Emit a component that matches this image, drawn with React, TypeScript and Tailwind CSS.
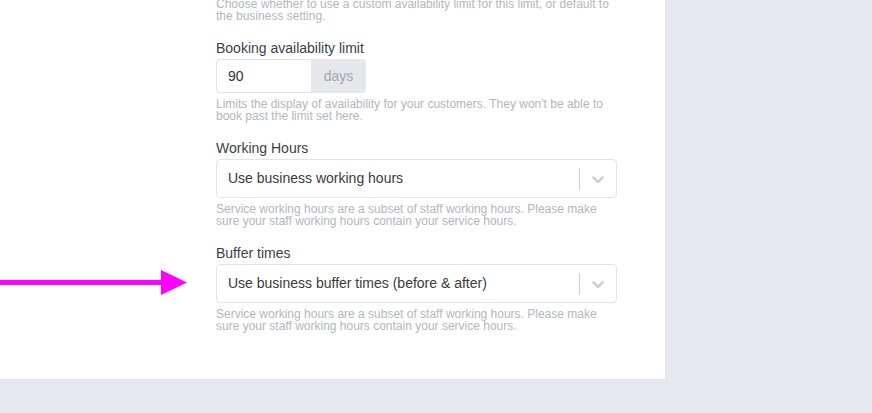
import React from 'react';

const font = { fontFamily: '"Liberation Sans", Arial, Helvetica, sans-serif' };

const Chevron: React.FC = () => (
  <svg viewBox="0 0 20 20" width="20" height="20" className="fill-[#cccccc]">
    <path d="M4.516 7.548c0.436-0.446 1.043-0.481 1.576 0l3.908 3.747 3.908-3.747c0.533-0.481 1.141-0.446 1.574 0 0.436 0.445 0.408 1.197 0 1.615-0.406 0.418-4.695 4.502-4.695 4.502-0.217 0.223-0.502 0.335-0.787 0.335s-0.57-0.112-0.789-0.335c0 0-4.287-4.084-4.695-4.502s-0.436-1.17 0-1.615z" />
  </svg>
);

const Help: React.FC<{ children: React.ReactNode; className?: string }> = ({ children, className = '' }) => (
  <p className={`text-[12px] leading-[12px] text-[#b3b6bd] ${className}`}>{children}</p>
);

const Label: React.FC<{ children: React.ReactNode }> = ({ children }) => (
  <div className="text-[14px] leading-[17px] text-[#3b3f49] mb-[2px]">{children}</div>
);

const Select: React.FC<{ value: string }> = ({ value }) => (
  <div className="h-[39px] w-full flex items-center border border-[#e3e4e8] rounded-[4px] bg-white">
    <div className="flex-1 pl-[11px] text-[14px] text-[#3a3a3a]">{value}</div>
    <span className="w-px h-[22px] bg-[#cccccc]" />
    <div className="px-[8px] flex items-center">
      <Chevron />
    </div>
  </div>
);

export default function App() {
  return (
    <div style={font} className="relative w-[872px] h-[413px] bg-[#e5e8ec] overflow-hidden">
      <div className="w-[665px] h-[380px] bg-white border-b border-[#dde1e6] pl-[216px] flex flex-col">
        <div className="w-[401px] -mt-[2px]">
          <Help>
            Choose whether to use a custom availability limit for this limit, or default to the business setting.
          </Help>

          <div className="mt-[18px]">
            <Label>Booking availability limit</Label>
            <div className="flex h-[34px] w-[150px]">
              <div className="w-[95px] border border-[#e3e4e8] border-r-0 rounded-l-[4px] flex items-center pl-[11px] text-[14px] text-[#333333]">
                90
              </div>
              <div className="flex-1 bg-[#e6e7ea] rounded-r-[4px] flex items-center justify-center text-[14px] text-[#a3a6ad]">
                days
              </div>
            </div>
            <Help className="mt-[5px]">
              Limits the display of availability for your customers. They won't be able to book past the limit set here.
            </Help>
          </div>

          <div className="mt-[18px]">
            <Label>Working Hours</Label>
            <Select value="Use business working hours" />
            <Help className="mt-[5px]">
              Service working hours are a subset of staff working hours. Please make sure your staff working hours contain your service hours.
            </Help>
          </div>

          <div className="mt-[18px]">
            <Label>Buffer times</Label>
            <Select value="Use business buffer times (before & after)" />
            <Help className="mt-[5px]">
              Service working hours are a subset of staff working hours. Please make sure your staff working hours contain your service hours.
            </Help>
          </div>
        </div>
      </div>

      <svg className="absolute left-0 top-[268px]" width="190" height="30" viewBox="0 0 190 30">
        <rect x="0" y="12" width="165" height="5" fill="#ff00ff" />
        <polygon points="161,2 187,14.5 161,27" fill="#ff00ff" />
      </svg>
    </div>
  );
}
